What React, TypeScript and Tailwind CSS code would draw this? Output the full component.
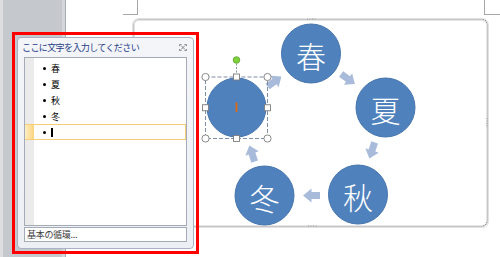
import React from 'react';

const jp = "font-['Noto_Sans_CJK_JP','Noto_Sans',sans-serif]";

const nodes = [
  { x: 177, y: 33.5, label: '春' },
  { x: 251.5, y: 87.5, label: '夏' },
  { x: 224, y: 174.5, label: '秋' },
  { x: 130.5, y: 175.5, label: '冬' },
];

const arrows = [
  { x: 214, y: 59, r: 36 },
  { x: 238, y: 130.5, r: 108 },
  { x: 177.5, y: 175.5, r: 180 },
  { x: 118, y: 133.5, r: 252 },
  { x: 140.5, y: 61.5, r: 324 },
];

const items = ['春', '夏', '秋', '冬'];

function Dots({ vertical = false }: { vertical?: boolean }) {
  return (
    <g fill="#9a9a9a">
      {[0, 1, 2, 3].map((i) =>
        vertical ? (
          <rect key={i} x={-0.5} y={i * 2.5 - 4} width={1} height={1} />
        ) : (
          <rect key={i} x={i * 2.5 - 4} y={-0.5} width={1} height={1} />
        )
      )}
    </g>
  );
}

function Diagram() {
  return (
    <svg width="353" height="206" className="block overflow-visible">
      {/* frame handles */}
      <g transform="translate(177,-1)"><Dots /></g>
      <g transform="translate(178,206)"><Dots /></g>
      <g transform="translate(353,102)"><Dots vertical /></g>
      <g fill="#9a9a9a">
        <rect x="349" y="-1" width="1" height="1" />
        <rect x="351" y="0" width="1" height="1" />
        <rect x="352" y="2" width="1" height="1" />
        <rect x="349" y="205" width="1" height="1" />
        <rect x="351" y="204" width="1" height="1" />
        <rect x="352" y="202" width="1" height="1" />
      </g>

      {arrows.map((a, i) => (
        <polygon
          key={i}
          points="-8.5,-3.5 0,-3.5 0,-7 8.5,0 0,7 0,3.5 -8.5,3.5"
          fill="#a9bbdb"
          transform={`translate(${a.x},${a.y}) rotate(${a.r})`}
        />
      ))}

      {nodes.map((n) => (
        <g key={n.label}>
          <circle cx={n.x} cy={n.y} r="29.5" fill="#4f81bd" stroke="#4675ad" strokeWidth="1" />
          <text
            x={n.x}
            y={n.y + 1}
            textAnchor="middle"
            dominantBaseline="central"
            fill="#ffffff"
            fontSize="30"
            fontWeight="300"
            fontFamily="'Noto Sans CJK JP', sans-serif"
          >
            {n.label}
          </text>
        </g>
      ))}

      {/* selected shape */}
      <circle cx="102.5" cy="87.5" r="29.5" fill="#4f81bd" stroke="#4675ad" strokeWidth="1" />
      <line x1="102.5" y1="82.5" x2="102.5" y2="92" stroke="#e2680f" strokeWidth="1.8" />
      <rect
        x="71.5"
        y="57"
        width="62"
        height="61.5"
        fill="none"
        stroke="#7f8fa6"
        strokeWidth="1"
        strokeDasharray="4 2"
      />
      <line x1="102.5" y1="43.5" x2="102.5" y2="57" stroke="#8a94a3" strokeWidth="1" strokeDasharray="2 1.5" />
      <circle cx="102.5" cy="40" r="3.3" fill="#7fd23b" stroke="#5c9e2e" strokeWidth="0.8" />
      {[
        [71.5, 57],
        [133.5, 57],
        [71.5, 118.5],
        [133.5, 118.5],
      ].map(([x, y], i) => (
        <circle key={i} cx={x} cy={y} r="3.6" fill="#ffffff" stroke="#7d7d7d" strokeWidth="0.9" />
      ))}
      {[
        [102.5, 57],
        [102.5, 118.5],
        [71.5, 87.75],
        [133.5, 87.75],
      ].map(([x, y], i) => (
        <rect key={i} x={x - 3} y={y - 3} width="6" height="6" fill="#ffffff" stroke="#7d7d7d" strokeWidth="0.9" />
      ))}
    </svg>
  );
}

function CloseIcon() {
  return (
    <svg width="8" height="7" viewBox="0 0 8 7" className="block">
      <g stroke="#8a8a8a" strokeWidth="1" fill="none">
        <path d="M0.5 0.5h2M5.5 0.5h2M0.5 6.5h2M5.5 6.5h2M0.5 0.5v1.5M7.5 0.5v1.5M0.5 5v1.5M7.5 5v1.5" />
        <path d="M2 1.5l4 4M6 1.5l-4 4" />
      </g>
    </svg>
  );
}

function TextPane() {
  return (
    <div className="absolute left-[12px] top-[32px] h-[222px] w-[187px] border-[3px] border-[#ff0000] p-[2px]">
      <div className={`flex h-full w-[177px] flex-col rounded-[4px] border border-[#a9b3c4] bg-[linear-gradient(to_bottom,#f3f5f9,#eceff4)] px-[6px] pb-[6px] ${jp}`}>
        <div className="-mx-[2px] flex h-[19px] shrink-0 items-center justify-between pr-[2px]">
          <span className="text-[9px] leading-none tracking-[-0.6px] text-[#1f3c85]">
            ここに文字を入力してください
          </span>
          <CloseIcon />
        </div>
        <div className="flex flex-1 flex-col border border-[#a4abb6] bg-[linear-gradient(to_right,#ebebeb_9px,#ffffff_9px)] pt-[2px]">
          {items.map((t) => (
            <div key={t} className="flex h-[16px] items-center pl-[18px]">
              <span className="h-[3px] w-[3px] rounded-full bg-black" />
              <span className="ml-[5px] text-[9px] leading-none text-black">{t}</span>
            </div>
          ))}
          <div className="flex h-[16px] border-y border-r border-[#f3cd78]">
            <div className="w-[9px] bg-[linear-gradient(to_right,#fdeec5,#fbd47c)]" />
            <div className="flex flex-1 items-center bg-[#fffefa] pl-[9px]">
              <span className="h-[3px] w-[3px] rounded-full bg-black" />
              <span className="ml-[5px] h-[9px] w-[1.5px] bg-black" />
            </div>
          </div>
        </div>
        <div className="mt-[1px] flex h-[15px] shrink-0 items-center border border-[#a4abb6] bg-white pl-[2px]">
          <span className="text-[9px] leading-none tracking-[-0.3px] text-[#3c3c3c]">基本の循環...</span>
        </div>
      </div>
    </div>
  );
}

export default function App() {
  return (
    <div className="relative flex h-[257px] w-[500px] overflow-hidden bg-white">
      <div className="flex h-full w-[66px] shrink-0">
        <div className="w-[3px] bg-[#dcdddf]" />
        <div className="flex-1 bg-[#c5c8cc]" />
        <div className="w-[3px] bg-[#d4d6d9]" />
        <div className="w-[1px] bg-[#a9adb2]" />
      </div>
      <div className="flex flex-1 flex-col">
        <div className="flex h-[15px] shrink-0">
          <div className="ml-[57px] w-[15px] border-b border-r border-[#a6a6a6]" />
          <div className="ml-auto w-[16px] border-b border-l border-[#a6a6a6]" />
        </div>
        <div className="ml-[67px] mt-[4px] h-[208px] w-[355px] rounded-[6px] border border-[#c6c6c6] shadow-[0_0_0_1px_#e2e2e2,inset_0_0_0_1px_#e6e6e6]">
          <Diagram />
        </div>
      </div>
      <TextPane />
    </div>
  );
}
